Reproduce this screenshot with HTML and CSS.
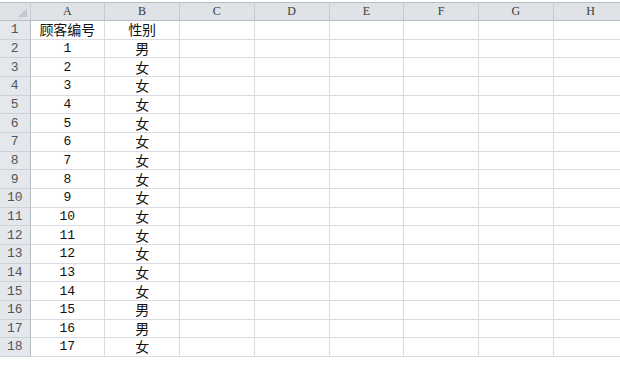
FILE: index.html
```html
<!DOCTYPE html>
<html lang="zh-CN">
<head>
  <meta charset="UTF-8" />
  <title>顾客性别</title>
  <link rel="stylesheet" href="styles.css">
</head>
<body>
  <div class="sheet">
    <table class="grid">
      <colgroup>
        <col class="col-rowhead">
        <col class="col-cell"><col class="col-cell"><col class="col-cell"><col class="col-cell">
        <col class="col-cell"><col class="col-cell"><col class="col-cell"><col class="col-cell">
      </colgroup>
      <thead>
        <tr>
          <th class="corner"><span class="corner-mark"></span></th>
          <th>A</th><th>B</th><th>C</th><th>D</th><th>E</th><th>F</th><th>G</th><th>H</th>
        </tr>
      </thead>
      <tbody id="rows">
        <tr><th>1</th><td class="cn">顾客编号</td><td class="cn">性别</td><td></td><td></td><td></td><td></td><td></td><td></td></tr>
      </tbody>
    </table>
  </div>

  <script>
    const genders = ['男','女','女','女','女','女','女','女','女','女','女','女','女','女','男','男','女'];
    const rows = document.getElementById('rows');

    genders.forEach((g, i) => {
      const tr = document.createElement('tr');
      tr.innerHTML = '<th>' + (i + 2) + '</th>' +
        '<td class="num">' + (i + 1) + '</td>' +
        '<td class="cn">' + g + '</td>' +
        '<td></td><td></td><td></td><td></td><td></td><td></td>';
      rows.appendChild(tr);
    });
  </script>
</body>
</html>
```

FILE: styles.css
```css
body {
  margin: 0;
  background-color: #ffffff;
  font-family: "Liberation Serif", "Noto Sans CJK SC", serif;
  overflow: hidden;
}

.sheet {
  padding-top: 2px;
}

.grid {
  border-collapse: collapse;
  table-layout: fixed;
  width: 628px;
}

.col-rowhead {
  width: 30px;
}

.col-cell {
  width: 74.75px;
}

.grid th,
.grid td {
  padding: 0;
  height: 17.67px;
  text-align: center;
  white-space: nowrap;
  overflow: hidden;
  line-height: 17px;
}

.grid td {
  border-right: 1px solid #dadcdf;
  border-bottom: 1px solid #dadcdf;
  color: #111;
}

.grid thead th {
  background-color: #dfe3e8;
  border-top: 1px solid #b8bdc4;
  border-right: 1px solid #c6cbd2;
  border-bottom: 1px solid #b8bdc4;
  font-weight: normal;
  font-size: 12px;
  color: #3a3a3a;
  height: 17px;
  line-height: 17px;
}

.grid tbody th {
  background-color: #e4e7ec;
  border-right: 1px solid #b8bdc4;
  border-bottom: 1px solid #cdd1d7;
  font-family: "Liberation Mono", monospace;
  font-weight: normal;
  font-size: 13px;
  color: #555;
}

.corner {
  position: relative;
}

.corner-mark {
  position: absolute;
  right: 3px;
  bottom: 3px;
  width: 0;
  height: 0;
  border-left: 9px solid transparent;
  border-bottom: 9px solid #c4c9cf;
}

.num {
  font-family: "Liberation Mono", monospace;
  font-size: 13px;
  color: #222;
}

.cn {
  font-family: "Noto Sans CJK SC", sans-serif;
  font-size: 14px;
  color: #1a1a1a;
}
```
